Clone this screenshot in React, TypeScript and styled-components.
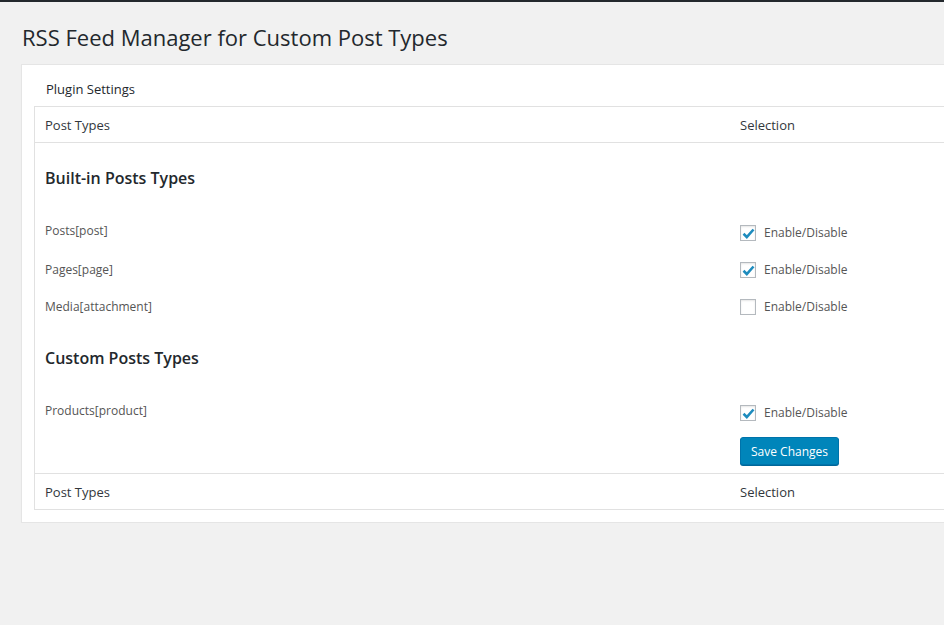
import styled, { createGlobalStyle } from "styled-components";

const GlobalStyle = createGlobalStyle`
  html, body {
    margin: 0;
    padding: 0;
    overflow: hidden;
  }
  body {
    background: #f1f1f1;
    font-family: "Open Sans", "Noto Sans", sans-serif;
    font-size: 13px;
    color: #444;
  }
`;

const TopBar = styled.div`
  height: 2px;
  background: #23282d;
`;

const Wrap = styled.div`
  padding: 0 0 0 21px;
  width: 1100px;
`;

const Title = styled.h1`
  margin: 0;
  padding: 21px 0 12px 1px;
  font-size: 22px;
  font-weight: 400;
  line-height: 29px;
  color: #23282d;
`;

const Card = styled.div`
  background: #fff;
  border: 1px solid #e5e5e5;
  box-shadow: 0 1px 1px rgba(0, 0, 0, 0.04);
  padding: 12px 0 12px 12px;
`;

const CardTitle = styled.div`
  padding-left: 12px;
  font-size: 13px;
  line-height: 24px;
  color: #23282d;
  margin-bottom: 5px;
`;

const Table = styled.table`
  width: 100%;
  border-collapse: collapse;
  border: 1px solid #e1e1e1;
  border-right: none;
`;

const HeadCell = styled.th<{ $w?: number }>`
  text-align: left;
  font-weight: 400;
  font-size: 13px;
  color: #32373c;
  padding: 9px 10px 7px;
  line-height: 19px;
  width: ${({ $w }) => ($w ? `${$w}px` : "auto")};
`;

const HeadRow = styled.tr<{ $top?: boolean }>`
  border-${({ $top }) => ($top ? "bottom" : "top")}: 1px solid #e1e1e1;
`;

const Cell = styled.td<{ $pt?: number }>`
  padding: ${({ $pt }) => $pt ?? 0}px 10px 0;
  vertical-align: top;
  font-size: 12px;
  line-height: 18px;
  color: #555;
`;

const SectionTitle = styled.h2<{ $pt: number }>`
  margin: 0;
  padding: ${({ $pt }) => $pt}px 0 0;
  font-size: 16px;
  line-height: 20px;
  font-weight: 600;
  color: #23282d;
`;

const Label = styled.label`
  display: flex;
  align-items: center;
  gap: 8px;
  font-size: 12px;
  color: #555;
  line-height: 18px;
`;

const Box = styled.span`
  width: 14px;
  height: 14px;
  border: 1px solid #b4b9be;
  background: #fff;
  box-shadow: inset 0 1px 2px rgba(0, 0, 0, 0.1);
  display: flex;
  align-items: center;
  justify-content: center;
  flex-shrink: 0;
`;

const SaveButton = styled.button`
  margin-top: 15px;
  height: 28px;
  padding: 0 10px;
  background: #0085ba;
  border: 1px solid #0073aa;
  border-radius: 3px;
  box-shadow: 0 1px 0 #006799;
  color: #fff;
  font-family: inherit;
  font-size: 12px;
  cursor: pointer;
`;

const Check = () => (
  <svg width="13" height="11" viewBox="0 0 13 11">
    <path d="M1.5 5.8 L4.8 9 L11.5 1.5" fill="none" stroke="#1e8cbe" strokeWidth="2.6" />
  </svg>
);

const CheckOption = ({ on }: { on: boolean }) => (
  <Label>
    <Box>{on && <Check />}</Box>
    Enable/Disable
  </Label>
);

type Item = { name: string; on: boolean };

const builtIn: Item[] = [
  { name: "Posts[post]", on: true },
  { name: "Pages[page]", on: true },
  { name: "Media[attachment]", on: false },
];

const custom: Item[] = [{ name: "Products[product]", on: true }];

const Rows = ({ items, first }: { items: Item[]; first: number }) => (
  <>
    {items.map((it, i) => (
      <tr key={it.name}>
        <Cell $pt={i === 0 ? first : 19}>{it.name}</Cell>
        <Cell $pt={i === 0 ? first + 2 : 19}>
          <CheckOption on={it.on} />
        </Cell>
      </tr>
    ))}
  </>
);

export default function App() {
  return (
    <>
      <GlobalStyle />
      <TopBar />
      <Wrap>
        <Title>RSS Feed Manager for Custom Post Types</Title>
        <Card>
          <CardTitle>Plugin Settings</CardTitle>
          <Table>
            <thead>
              <HeadRow $top>
                <HeadCell $w={675}>Post Types</HeadCell>
                <HeadCell>Selection</HeadCell>
              </HeadRow>
            </thead>
            <tbody>
              <tr>
                <Cell colSpan={2}>
                  <SectionTitle $pt={25}>Built-in Posts Types</SectionTitle>
                </Cell>
              </tr>
              <Rows items={builtIn} first={34} />
              <tr>
                <Cell colSpan={2}>
                  <SectionTitle $pt={32}>Custom Posts Types</SectionTitle>
                </Cell>
              </tr>
              <Rows items={custom} first={34} />
              <tr>
                <Cell />
                <Cell>
                  <SaveButton>Save Changes</SaveButton>
                </Cell>
              </tr>
              <tr>
                <Cell $pt={8} />
                <Cell $pt={8} />
              </tr>
            </tbody>
            <tfoot>
              <HeadRow>
                <HeadCell>Post Types</HeadCell>
                <HeadCell>Selection</HeadCell>
              </HeadRow>
            </tfoot>
          </Table>
        </Card>
      </Wrap>
    </>
  );
}
